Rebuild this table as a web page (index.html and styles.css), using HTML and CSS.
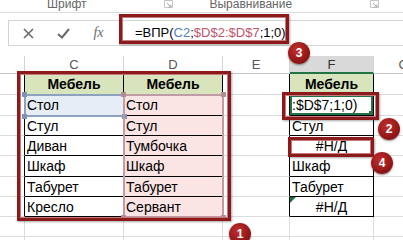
FILE: index.html
```html
<!DOCTYPE html>
<html>
<head>
	<meta http-equiv="Content-Type" content="text/html;charset=UTF-8">
	<title>ВПР</title>
	<link rel="stylesheet" href="styles.css">
</head>
<body>
	<div class="ribbon">
		<span class="grp grp-font">Шрифт</span>
		<span class="launch"><svg width="9" height="8" viewBox="0 0 9 8"><path d="M0.5 7.5V0.5H8.5V7.5Z" fill="none" stroke="#c4c4c4"/><path d="M3 3L7 7M7 4.5V7H4.5" fill="none" stroke="#a8a8a8"/></svg></span>
		<span class="grp grp-align">Выравнивание</span>
		<span class="launch"><svg width="9" height="8" viewBox="0 0 9 8"><path d="M0.5 7.5V0.5H8.5V7.5Z" fill="none" stroke="#c4c4c4"/><path d="M3 3L7 7M7 4.5V7H4.5" fill="none" stroke="#a8a8a8"/></svg></span>
		<span class="grp grp-num">Число</span>
	</div>

	<div class="fbar">
		<div class="fbar-btns">
			<span class="fbtn"><svg width="11" height="11" viewBox="0 0 11 11"><path d="M1 1L10 10M10 1L1 10" stroke="#6a6a6a" stroke-width="1.6"/></svg></span>
			<span class="fbtn"><svg width="13" height="11" viewBox="0 0 13 11"><path d="M1 6L5 9.5L12 1" fill="none" stroke="#6a6a6a" stroke-width="2"/></svg></span>
			<span class="fbtn fx">fx</span>
		</div>
		<div class="fbar-input">=ВПР(<span class="ref1">C2</span>;<span class="ref2">$D$2:$D$7</span>;1;0)</div>
	</div>

	<div class="sheet">
		<!-- заголовки столбцов -->
		<div class="c h"></div>
		<div class="c h">C</div>
		<div class="c h">D</div>
		<div class="c h">E</div>
		<div class="c h sel">F</div>
		<div class="c h">G</div>

		<div class="c edge"></div>
		<div class="c t th">Мебель</div>
		<div class="c t th">Мебель</div>
		<div class="c edge"></div>
		<div class="c t th">Мебель</div>
		<div class="c"></div>

		<div class="c edge"></div>
		<div class="c t blue">Стол</div>
		<div class="c t pink">Стол</div>
		<div class="c edge"></div>
		<div class="c t active">:$D$7;1;0)<i class="fill"></i></div>
		<div class="c"></div>

		<div class="c edge"></div>
		<div class="c t">Стул</div>
		<div class="c t pink">Стул</div>
		<div class="c edge"></div>
		<div class="c t">Стул</div>
		<div class="c"></div>

		<div class="c edge"></div>
		<div class="c t">Диван</div>
		<div class="c t pink">Тумбочка</div>
		<div class="c edge"></div>
		<div class="c t err">#Н/Д</div>
		<div class="c"></div>

		<div class="c edge"></div>
		<div class="c t">Шкаф</div>
		<div class="c t pink">Шкаф</div>
		<div class="c edge"></div>
		<div class="c t">Шкаф</div>
		<div class="c"></div>

		<div class="c edge"></div>
		<div class="c t">Табурет</div>
		<div class="c t pink">Табурет</div>
		<div class="c edge"></div>
		<div class="c t">Табурет</div>
		<div class="c"></div>

		<div class="c edge"></div>
		<div class="c t">Кресло</div>
		<div class="c t pink">Сервант</div>
		<div class="c edge"></div>
		<div class="c t err warn">#Н/Д</div>
		<div class="c"></div>

		<div class="c"></div><div class="c"></div><div class="c"></div><div class="c"></div><div class="c"></div><div class="c"></div>
		<div class="c"></div><div class="c"></div><div class="c"></div><div class="c"></div><div class="c"></div><div class="c"></div>
	</div>

	<!-- рамки ссылок формулы -->
	<div class="rng rng-c">
		<i class="hdl tl"></i><i class="hdl bl"></i><i class="hdl br"></i>
	</div>
	<div class="rng rng-d">
		<i class="hdl tl"></i><i class="hdl tr"></i><i class="hdl bl"></i><i class="hdl br"></i>
	</div>

	<!-- выноски -->
	<div class="mark m1"></div>
	<div class="mark m2"></div>
	<div class="mark m3"></div>
	<div class="mark m4"></div>

	<div class="badge b1">1</div>
	<div class="badge b2">2</div>
	<div class="badge b3">3</div>
	<div class="badge b4">4</div>
</body>
</html>
```

FILE: styles.css
```css
*{
	margin: 0;
	padding: 0;
	box-sizing: border-box;
}
body{
	width: 403px;
	height: 240px;
	overflow: hidden;
	position: relative;
	background: #fff;
	font-family: "Liberation Sans", Arial, sans-serif;
}

/* лента */
.ribbon{
	height: 13px;
	border-bottom: 1px solid #dcdcdc;
	display: flex;
	align-items: flex-start;
	overflow: hidden;
	font-size: 12px;
	color: #666;
	white-space: nowrap;
}
.ribbon .grp{
	margin-top: -3px;
	line-height: 14px;
}
.grp-font{
	margin-left: 47px;
}
.grp-align{
	margin-left: 36px;
}
.grp-num{
	margin-left: 40px;
}
.launch{
	margin-left: 78px;
	height: 9px;
	display: flex;
}

/* строка формул */
.fbar{
	height: 43px;
	padding: 7px 0 0 8px;
	display: flex;
}
.fbar-btns{
	width: 111px;
	height: 26px;
	border: 1px solid #d4d4d4;
	border-right: none;
	display: flex;
	align-items: center;
	padding-left: 2px;
}
.fbtn{
	width: 35px;
	display: flex;
	justify-content: center;
	align-items: center;
}
.fbtn.fx{
	font-family: "Liberation Serif", serif;
	font-style: italic;
	font-size: 14px;
	color: #6a6a6a;
}
.fbar-input{
	flex: 1;
	height: 26px;
	border: 1px solid #d4d4d4;
	border-right: none;
	padding-left: 15px;
	font-size: 13px;
	line-height: 24px;
	color: #000;
}
.ref1{
	color: #4f81bd;
}
.ref2{
	color: #c0566b;
}

/* лист */
.sheet{
	display: grid;
	grid-template-columns: 25px 99px 99px 67px 84px 60px;
	grid-template-rows: 18px 21px 21px 20px 20px 21px 20px 20px 20px 20px;
	font-size: 14px;
	color: #000;
}
.c{
	position: relative;
	border-right: 1px solid #dadcdd;
	border-bottom: 1px solid #dadcdd;
	padding-left: 2px;
	line-height: 20px;
	white-space: nowrap;
	overflow: hidden;
}
.c.h{
	padding: 0;
	text-align: center;
	font-size: 13px;
	line-height: 17px;
	color: #555;
	border-right-color: #d4d4d4;
	border-bottom-color: #c6c6c6;
}
.c.h.sel{
	background: #d9d9d9;
	border-bottom: 2px solid #217346;
	color: #333;
}
.c.edge{
	border-right-color: #000;
}
.c.t{
	border-right-color: #000;
	border-bottom-color: #000;
}
.c.th{
	background: #d8e4bc;
	font-weight: bold;
	text-align: center;
	padding: 0;
}
.c.pink{
	background: #fbe4e4;
}
.c.blue{
	background: #e6edf7;
}
.c.err{
	text-align: center;
	padding: 0;
}
.c.active{
	box-shadow: inset 0 0 0 2px #217346;
}
.c.active .fill{
	position: absolute;
	right: 0;
	bottom: 0;
	width: 4px;
	height: 4px;
	background: #217346;
}
.c.warn::before{
	content: "";
	position: absolute;
	left: 0;
	top: 0;
	border-top: 6px solid #1e7145;
	border-right: 6px solid transparent;
}

/* цветные рамки ссылок */
.rng{
	position: absolute;
	border: 2px solid;
}
.rng-c{
	left: 24px;
	top: 94px;
	width: 101px;
	height: 23px;
	border-color: #8da2be;
}
.rng-d{
	left: 123px;
	top: 94px;
	width: 101px;
	height: 124px;
	border-color: #c19ba5;
}
.hdl{
	position: absolute;
	width: 5px;
	height: 5px;
}
.rng-c .hdl{
	background: #7f94b0;
}
.rng-d .hdl{
	background: #b58b96;
}
.hdl.tl{ left: -4px; top: -4px; }
.hdl.tr{ right: -4px; top: -4px; }
.hdl.bl{ left: -4px; bottom: -4px; }
.hdl.br{ right: -4px; bottom: -4px; }

/* красные рамки и номера */
.mark{
	position: absolute;
	border: 3px solid #8d1a1a;
	box-shadow: 1px 1px 2px rgba(0,0,0,.35), inset 0 0 0 1px #c27a7a;
}
.m1{ left: 17px; top: 71px; width: 214px; height: 150px; }
.m2{ left: 282px; top: 92px; width: 97px; height: 28px; }
.m3{ left: 119px; top: 14px; width: 170px; height: 30px; }
.m4{ left: 288px; top: 137px; width: 86px; height: 20px; }

.badge{
	position: absolute;
	width: 22px;
	height: 22px;
	border-radius: 50%;
	background: radial-gradient(circle at 40% 35%, #c42d2d, #8a1414 70%);
	box-shadow: 0 1px 2px rgba(0,0,0,.45);
	color: #fff;
	font-weight: bold;
	font-size: 12px;
	line-height: 22px;
	text-align: center;
}
.b1{ left: 229px; top: 223px; }
.b2{ left: 378px; top: 118px; }
.b3{ left: 288px; top: 42px; }
.b4{ left: 371px; top: 152px; }
```
